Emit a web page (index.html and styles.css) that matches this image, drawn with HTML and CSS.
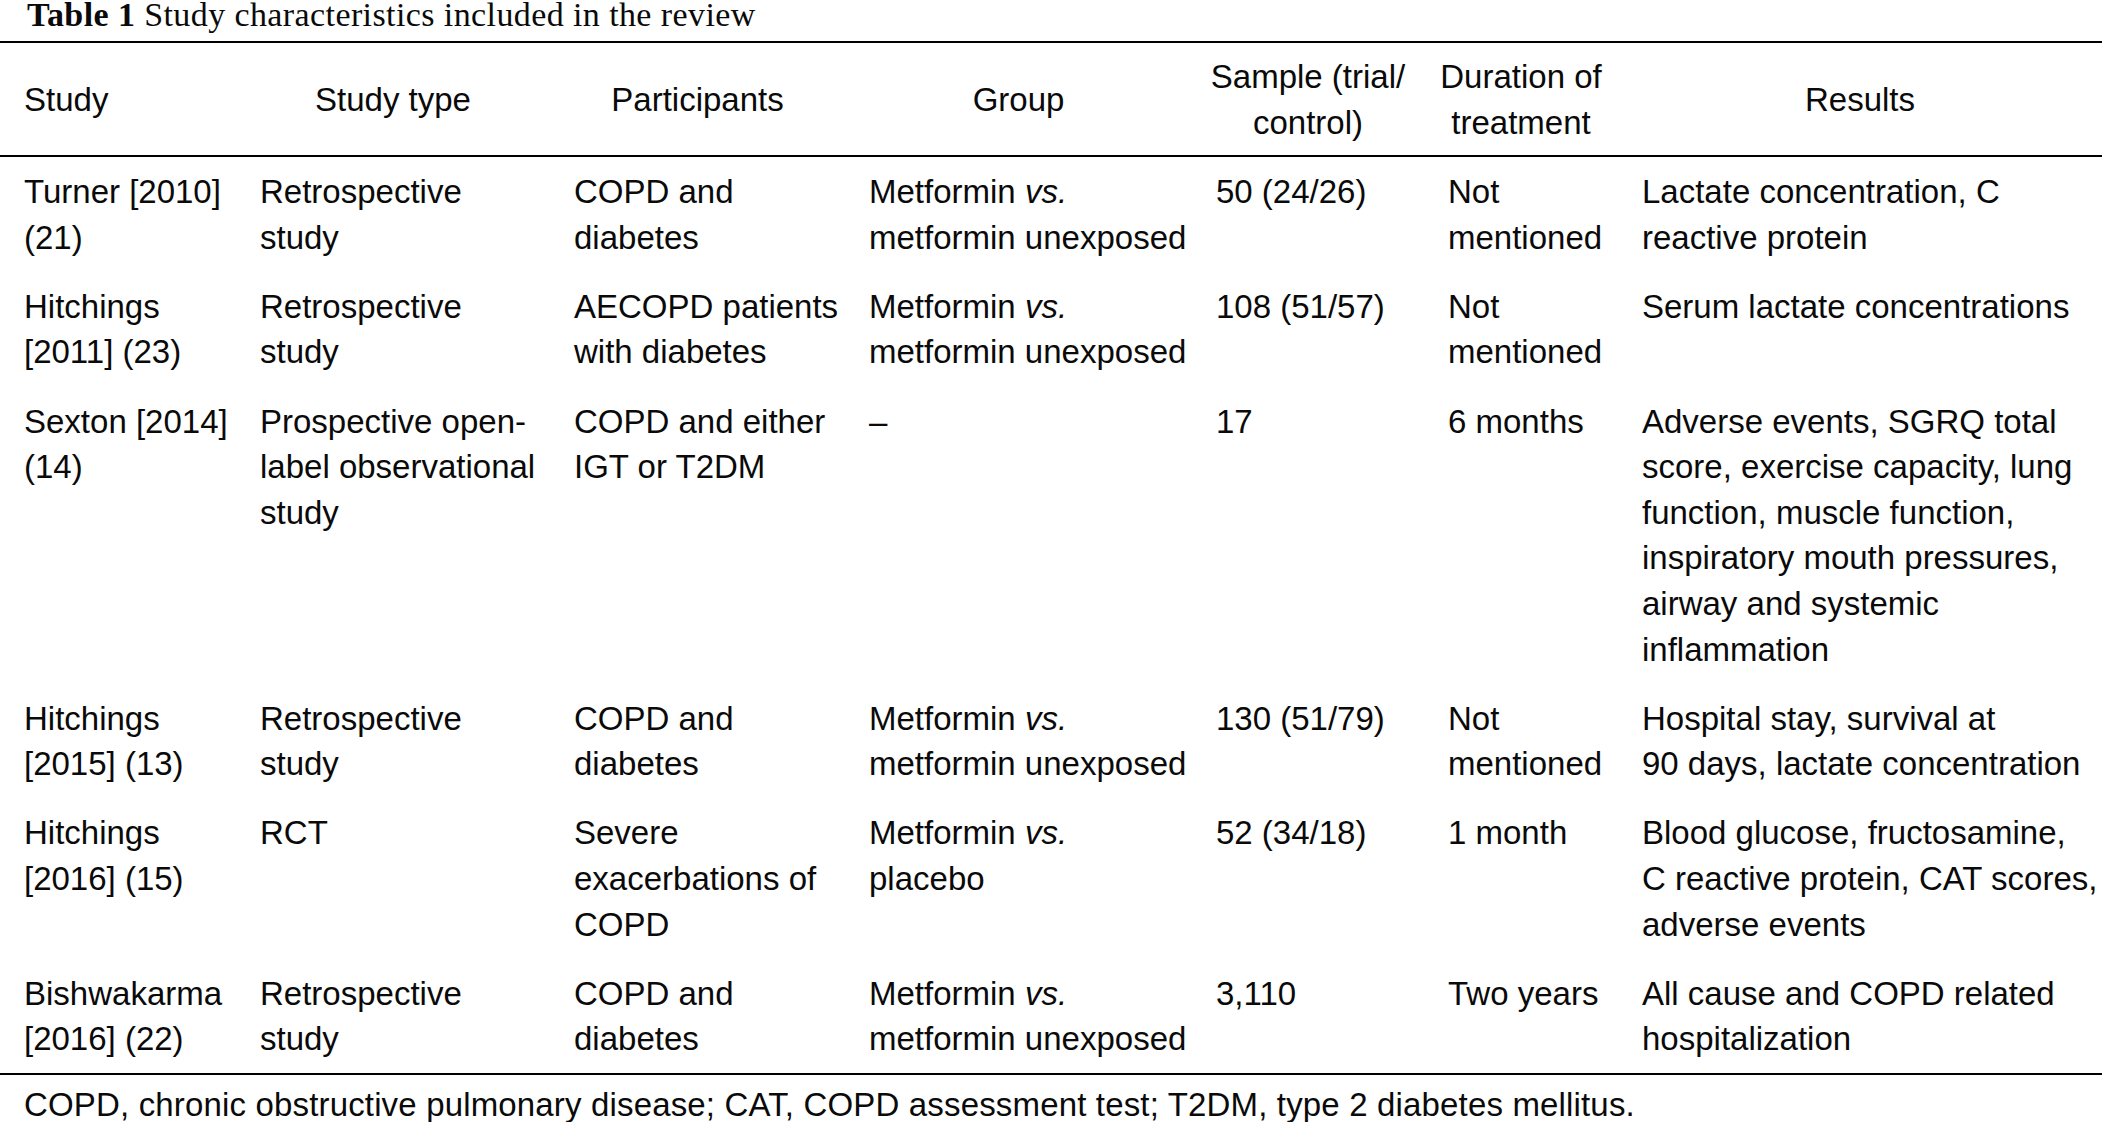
FILE: index.html
```html
<!DOCTYPE html>
<html lang="en">
<head>
<meta charset="utf-8">
<title>Table 1 Study characteristics included in the review</title>
<link rel="stylesheet" href="styles.css">
</head>
<body>
<div class="title"><b>Table 1</b> Study characteristics included in the review</div>
<table class="study-table">
  <colgroup>
    <col class="c-study">
    <col class="c-type">
    <col class="c-part">
    <col class="c-group">
    <col class="c-sample">
    <col class="c-dur">
    <col class="c-res">
  </colgroup>
  <thead>
    <tr>
      <th class="left">Study</th>
      <th>Study type</th>
      <th>Participants</th>
      <th>Group</th>
      <th>Sample (trial/ control)</th>
      <th>Duration of treatment</th>
      <th>Results</th>
    </tr>
  </thead>
  <tbody>
    <tr>
      <td>Turner [2010] (21)</td>
      <td>Retrospective study</td>
      <td>COPD and diabetes</td>
      <td>Metformin <em>vs.</em> metformin unexposed</td>
      <td>50 (24/26)</td>
      <td>Not mentioned</td>
      <td>Lactate concentration, C reactive protein</td>
    </tr>
    <tr>
      <td>Hitchings [2011] (23)</td>
      <td>Retrospective study</td>
      <td>AECOPD patients with diabetes</td>
      <td>Metformin <em>vs.</em> metformin unexposed</td>
      <td>108 (51/57)</td>
      <td>Not mentioned</td>
      <td>Serum lactate concentrations</td>
    </tr>
    <tr>
      <td>Sexton [2014] (14)</td>
      <td>Prospective open-label observational study</td>
      <td>COPD and either IGT or T2DM</td>
      <td>–</td>
      <td>17</td>
      <td>6 months</td>
      <td>Adverse events, SGRQ total score, exercise capacity, lung function, muscle function, inspiratory mouth pressures, airway and systemic inflammation</td>
    </tr>
    <tr>
      <td>Hitchings [2015] (13)</td>
      <td>Retrospective study</td>
      <td>COPD and diabetes</td>
      <td>Metformin <em>vs.</em> metformin unexposed</td>
      <td>130 (51/79)</td>
      <td>Not mentioned</td>
      <td>Hospital stay, survival at 90&nbsp;days, lactate concentration</td>
    </tr>
    <tr>
      <td>Hitchings [2016] (15)</td>
      <td>RCT</td>
      <td>Severe exacerbations of COPD</td>
      <td>Metformin <em>vs.</em> placebo</td>
      <td>52 (34/18)</td>
      <td>1 month</td>
      <td>Blood glucose, fructosamine, C&nbsp;reactive protein, CAT scores, adverse events</td>
    </tr>
    <tr class="last">
      <td>Bishwakarma [2016] (22)</td>
      <td>Retrospective study</td>
      <td>COPD and diabetes</td>
      <td>Metformin <em>vs.</em> metformin unexposed</td>
      <td>3,110</td>
      <td>Two years</td>
      <td>All cause and COPD related hospitalization</td>
    </tr>
  </tbody>
</table>
<p class="footnote">COPD, chronic obstructive pulmonary disease; CAT, COPD assessment test; T2DM, type 2 diabetes mellitus.</p>
</body>
</html>
```

FILE: styles.css
```css
html, body {
  margin: 0;
  padding: 0;
  background: #ffffff;
  overflow: hidden;
}

body {
  width: 2102px;
  color: #0a0a0a;
  font-family: "Liberation Sans", Arial, sans-serif;
  font-size: 33px;
}

.title {
  font-family: "Liberation Serif", "Times New Roman", serif;
  font-size: 34px;
  letter-spacing: 0.4px;
  line-height: 29px;
  height: 29px;
  padding: 0 0 12px 27px;
  white-space: nowrap;
}

.title b {
  font-weight: bold;
}

.study-table {
  width: 2102px;
  table-layout: fixed;
  border-collapse: separate;
  border-spacing: 0;
  line-height: 45.6px;
}

.c-study { width: 236px; }
.c-type { width: 314px; }
.c-part { width: 295px; }
.c-group { width: 347px; }
.c-sample { width: 232px; }
.c-dur { width: 194px; }
.c-res { width: 484px; }

.study-table th {
  font-weight: normal;
  text-align: center;
  vertical-align: middle;
  padding: 11px 14px 10px 14px;
  border-top: 2px solid #000;
  border-bottom: 2px solid #000;
}

.study-table th.left {
  text-align: left;
  padding-left: 24px;
}

.study-table td {
  text-align: left;
  vertical-align: top;
  padding: 12px 4px 11.5px 24px;
}

.study-table td:last-child {
  padding-right: 0;
}

.study-table tr.last td {
  border-bottom: 2px solid #000;
}

.study-table em {
  font-style: italic;
}

.footnote {
  margin: 0;
  padding: 13px 0 0 24px;
  line-height: 34px;
  letter-spacing: 0.16px;
  white-space: nowrap;
}
```
